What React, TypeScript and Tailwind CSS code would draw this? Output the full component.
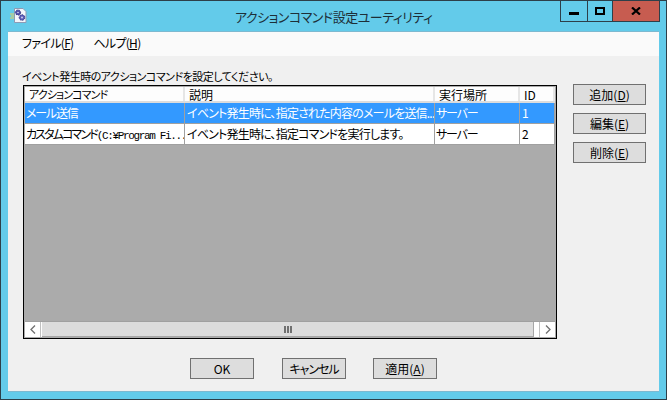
import React from "react";

const font = { fontFamily: '"Noto Sans CJK JP", "Noto Sans", sans-serif' };

const columns = [
  { label: "アクションコマンド", width: "w-[160px]", head: "text-[11px] tracking-[-0.9px]", body: "pl-[1px] tracking-[-1.2px]" },
  { label: "説明", width: "w-[250px]", head: "text-[12px]", body: "pl-[2px] tracking-[-0.8px]" },
  { label: "実行場所", width: "w-[85px]", head: "text-[12px]", body: "pl-[1px] tracking-[-1.2px]" },
  { label: "ID", width: "flex-1", head: "text-[12px]", body: "pl-[2px]" },
];

const rows: { cells: React.ReactNode[]; selected: boolean }[] = [
  {
    cells: ["メール送信", "イベント発生時に、指定された内容のメールを送信...", "サーバー", "1"],
    selected: true,
  },
  {
    cells: [
      <>
        <span className="tracking-[-1.9px]">カスタムコマンド</span>
        <span className="font-['Liberation_Mono',monospace] text-[11px] tracking-[-1.35px]">(C:¥Program Fi...</span>
      </>,
      "イベント発生時に、指定コマンドを実行します。",
      "サーバー",
      "2",
    ],
    selected: false,
  },
];

function AppIcon() {
  return (
    <svg width="17" height="15" viewBox="0 0 17 15" className="shrink-0">
      <path d="M4.5 0.5h8.5l3 3v11H4.5z" fill="#f4f6fb" stroke="#8d9bb5" />
      <path d="M0 6h4M1 8h3M0 10h4" stroke="#e3cf62" />
      <circle cx="8" cy="4.5" r="2.6" fill="#4f4fa8" stroke="#35357f" strokeDasharray="1.5 1" />
      <circle cx="12" cy="9.5" r="2.8" fill="#5a5ab8" stroke="#35357f" strokeDasharray="1.5 1" />
      <circle cx="8" cy="4.5" r="0.8" fill="#d8d8f0" />
      <circle cx="12" cy="9.5" r="0.9" fill="#d8d8f0" />
    </svg>
  );
}

function WinButton({ label, mnemonic, className }: { label: string; mnemonic?: string; className?: string }) {
  return (
    <button className={`w-[64px] h-[21px] bg-[#dddddd] border border-[#707070] text-[12px] leading-none text-black flex items-center justify-center ${className ?? ""}`}>
      {label}
      {mnemonic && (
        <>
          (<span className="underline">{mnemonic}</span>)
        </>
      )}
    </button>
  );
}

function SideButton({ label, mnemonic }: { label: string; mnemonic: string }) {
  return (
    <button className="w-[73px] h-[21px] bg-[#dddddd] border border-[#707070] text-[12px] leading-none text-black flex items-center justify-center">
      {label}(<span className="underline">{mnemonic}</span>)
    </button>
  );
}

export default function App() {
  return (
    <div
      style={font}
      className="w-[667px] h-[400px] bg-[#63cbea] border border-[#2d3f49] flex flex-col overflow-hidden text-black [font-feature-settings:'palt']"
    >
      {/* title bar */}
      <div className="h-[30px] shrink-0 flex items-start relative">
        <div className="pl-[9px] pt-[7px]">
          <AppIcon />
        </div>
        <div className="flex-1 pt-[6px] pl-[208px] text-[13px] leading-[20px] tracking-[-0.5px] text-[#1d2f38]">
          アクションコマンド設定ユーティリティ
        </div>
        <div className="flex h-[21px] mr-[6px] border-x border-b border-[#2d3f49]">
          <div className="w-[27px] border-r border-[#2d3f49] flex items-center justify-center">
            <div className="w-[10px] h-[3px] bg-black mt-[4px]" />
          </div>
          <div className="w-[25px] border-r border-[#2d3f49] flex items-center justify-center">
            <div className="w-[10px] h-[8px] border-2 border-black" />
          </div>
          <div className="w-[46px] bg-[#c75c50] flex items-center justify-center">
            <svg width="10" height="8" viewBox="0 0 10 8">
              <path d="M1 0.5l8 7M9 0.5l-8 7" stroke="#000" strokeWidth="2.2" />
            </svg>
          </div>
        </div>
      </div>

      {/* client area */}
      <div className="mx-[7px] h-[361px] bg-[#f0f0f0] border-t border-b border-[#7db9d0] flex flex-col">
        {/* menu */}
        <div className="h-[24px] shrink-0 bg-[#fafafa] flex items-center pl-[14px] gap-[20px] text-[12px] tracking-[-0.7px] pb-[2px]">
          <span>
            ファイル(<span className="underline">F</span>)
          </span>
          <span>
            ヘルプ(<span className="underline">H</span>)
          </span>
        </div>

        <div className="flex-1 flex flex-col pl-[15px]">
          <div className="pt-[12px] h-[29px] -ml-px text-[11px] leading-[16px] tracking-[-0.5px]">
            イベント発生時のアクションコマンドを設定してください。
          </div>

          <div className="flex">
            {/* list */}
            <div className="w-[534px] h-[254px] border border-black p-px flex flex-col bg-[#ababab]">
              <div className="h-[16px] bg-[#fdfdfd] border-b-2 border-[#dcdcdc] flex leading-[15px]">
                {columns.map((c) => (
                  <div key={c.label} className={`${c.width} ${c.head} pl-[4px] border-r-2 border-[#e6e6e6] whitespace-nowrap`}>
                    {c.label}
                  </div>
                ))}
              </div>
              {rows.map((r, i) => (
                <div
                  key={i}
                  className={`h-[21px] flex text-[12px] leading-[20px] border-b border-[#a0a0a0] ${
                    r.selected ? "bg-[#3399ff] text-white" : "bg-white text-black"
                  }`}
                >
                  {r.cells.map((cell, j) => (
                    <div
                      key={j}
                      className={`${columns[j].width} ${columns[j].body} border-r border-[#a0a0a0] overflow-hidden whitespace-nowrap`}
                    >
                      {cell}
                    </div>
                  ))}
                </div>
              ))}
              <div className="flex-1" />
              {/* horizontal scrollbar */}
              <div className="h-[16px] border-t border-[#a0a0a0] flex bg-white">
                <div className="w-[16px] border-r border-[#c0c0c0] flex items-center justify-center">
                  <svg width="6" height="9" viewBox="0 0 6 9">
                    <path d="M5 0.5l-4 4 4 4" fill="none" stroke="#707070" strokeWidth="1.3" />
                  </svg>
                </div>
                <div className="w-[492px] ml-px bg-[#dcdcdc] border-r border-b border-[#a6a6a6] flex items-center justify-center gap-px">
                  <div className="w-[2px] h-[7px] bg-[#707070]" />
                  <div className="w-[2px] h-[7px] bg-[#707070]" />
                  <div className="w-[2px] h-[7px] bg-[#707070]" />
                </div>
                <div className="flex-1" />
                <div className="w-[16px] border-l border-[#c0c0c0] flex items-center justify-center">
                  <svg width="6" height="9" viewBox="0 0 6 9">
                    <path d="M1 0.5l4 4-4 4" fill="none" stroke="#707070" strokeWidth="1.3" />
                  </svg>
                </div>
              </div>
            </div>

            {/* side buttons */}
            <div className="ml-[16px] -mt-px flex flex-col gap-[8px]">
              <SideButton label="追加" mnemonic="D" />
              <SideButton label="編集" mnemonic="E" />
              <SideButton label="削除" mnemonic="E" />
            </div>
          </div>

          {/* bottom buttons */}
          <div className="flex pl-[167px] gap-[28px] mt-[19px]">
            <WinButton label="OK" />
            <WinButton label="キャンセル" className="text-[11px] tracking-[-1px]" />
            <WinButton label="適用" mnemonic="A" className="-ml-px" />
          </div>
        </div>
      </div>
    </div>
  );
}
